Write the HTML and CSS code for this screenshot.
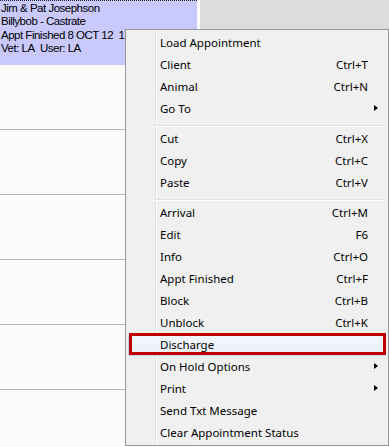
FILE: index.html
```html
<!DOCTYPE html>
<html>
<head>
<meta charset="utf-8">
<link rel="stylesheet" href="styles.css">
</head>
<body>
<div class="schedule">
  <div class="col-left">
    <div class="appt">
      <div>Jim &amp; Pat Josephson</div>
      <div>Billybob - Castrate</div>
      <div>Appt Finished 8 OCT 12&nbsp; 1</div>
      <div>Vet: LA&nbsp; User: LA</div>
    </div>
    <div class="slot"></div>
    <div class="slot"></div>
    <div class="slot"></div>
    <div class="slot"></div>
    <div class="slot"></div>
    <div class="slot last"></div>
  </div>
  <div class="divider"></div>
  <div class="col-right">
    <div class="band"></div>
  </div>
</div>

<div class="menu">
  <div class="item"><span>Load Appointment</span></div>
  <div class="item"><span>Client</span><span class="key">Ctrl+T</span></div>
  <div class="item"><span>Animal</span><span class="key">Ctrl+N</span></div>
  <div class="item sub"><span>Go To</span><span class="arrow"></span></div>
  <div class="sep"></div>
  <div class="item"><span>Cut</span><span class="key">Ctrl+X</span></div>
  <div class="item"><span>Copy</span><span class="key">Ctrl+C</span></div>
  <div class="item"><span>Paste</span><span class="key">Ctrl+V</span></div>
  <div class="sep"></div>
  <div class="item"><span>Arrival</span><span class="key">Ctrl+M</span></div>
  <div class="item"><span>Edit</span><span class="key">F6</span></div>
  <div class="item"><span>Info</span><span class="key">Ctrl+O</span></div>
  <div class="item"><span>Appt Finished</span><span class="key">Ctrl+F</span></div>
  <div class="item"><span>Block</span><span class="key">Ctrl+B</span></div>
  <div class="item"><span>Unblock</span><span class="key">Ctrl+K</span></div>
  <div class="item hover"><span>Discharge</span></div>
  <div class="item sub"><span>On Hold Options</span><span class="arrow"></span></div>
  <div class="item sub"><span>Print</span><span class="arrow"></span></div>
  <div class="item"><span>Send Txt Message</span></div>
  <div class="item"><span>Clear Appointment Status</span></div>
</div>
</body>
</html>
```
FILE: styles.css
```css
html, body {
  margin: 0;
  padding: 0;
}
body {
  width: 389px;
  height: 447px;
  overflow: hidden;
  position: relative;
  background: #fbfbfb;
}
.schedule {
  display: grid;
  grid-template-columns: 199px 1px 1fr;
  height: 447px;
}
.col-left {
  background: #fbfbfb;
}
.appt {
  height: 65px;
  box-sizing: border-box;
  background: #c9c9fb;
  border-top: 1px dotted #222;
  padding: 1px 0 0 1px;
  font-family: "Liberation Sans", Arial, sans-serif;
  font-size: 11.5px;
  letter-spacing: -0.5px;
  line-height: 13.3px;
  color: #000;
  margin-right: 2px;
}
.slot {
  height: 64px;
  border-bottom: 1px solid #b4b4b4;
}
.slot.last {
  border-bottom: none;
}
.divider {
  background: #fff;
}
.col-right {
  background: #fbfbfb;
}
.band {
  height: 29px;
  background: #dcdcdc;
}

.menu {
  position: absolute;
  left: 125px;
  top: 29px;
  width: 264px;
  box-sizing: border-box;
  border: 1px solid #979797;
  padding: 2px 2px 1px 2px;
  background: linear-gradient(to right, #f0f0f0 29px, #e2e3e3 29px, #e2e3e3 30px, #ffffff 30px, #ffffff 31px, #f0f0f0 31px);
  font-family: "Noto Sans", "Open Sans", sans-serif;
  font-size: 11.5px;
  color: #000;
}
.item {
  position: relative;
  height: 22px;
  box-sizing: border-box;
  display: flex;
  align-items: center;
  justify-content: space-between;
  padding: 0 18px 2px 32px;
}
.key {
  text-align: right;
}
.arrow {
  width: 0;
  height: 0;
  border-top: 3.5px solid transparent;
  border-bottom: 3.5px solid transparent;
  border-left: 4px solid #000;
  margin-right: -10px;
}
.sep {
  height: 1px;
  background: #e0e0e0;
  border-bottom: 1px solid #fff;
  margin: 5px 0 1px 27px;
}
.hover {
  background: linear-gradient(#f4f7fc, #e8eff9);
  box-shadow: inset 0 0 0 1px #b9d4f2;
  border-radius: 3px;
}
.hover::after {
  content: "";
  position: absolute;
  left: 1px;
  right: 0;
  top: -1px;
  bottom: 1px;
  border: 3px solid #c00000;
}
```
